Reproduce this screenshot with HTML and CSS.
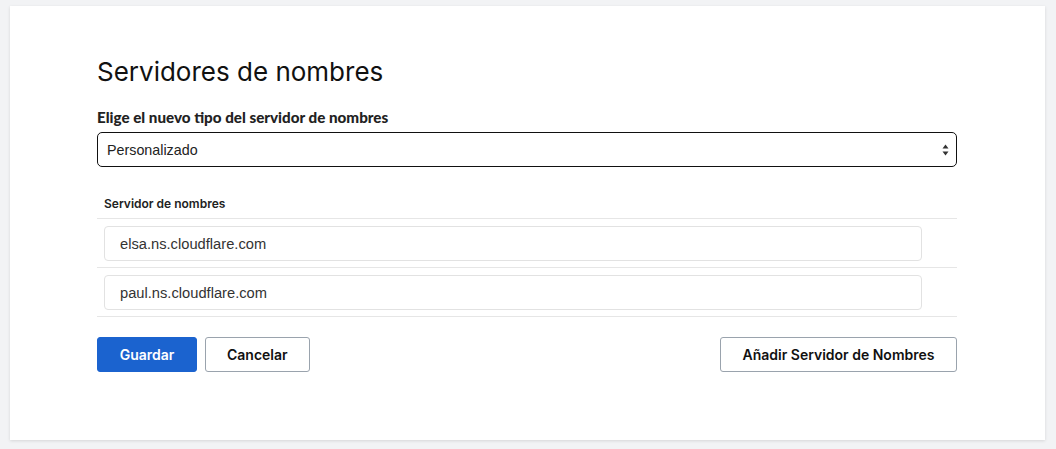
FILE: index.html
```html
<!DOCTYPE html>
<html lang="es">
<head>
<meta charset="utf-8">
<link rel="stylesheet" href="styles.css">
</head>
<body>
<div class="card">
  <h1 class="title">Servidores de nombres</h1>
  <label class="label" for="tipo">Elige el nuevo tipo del servidor de nombres</label>
  <div class="select">
    <span class="select-text">Personalizado</span>
    <svg class="arrows" width="7" height="12" viewBox="0 0 7 12"><path d="M3.5 0.5 L6.5 4.5 H0.5 Z" fill="#333"/><path d="M3.5 11.5 L6.5 7.5 H0.5 Z" fill="#333"/></svg>
  </div>
  <div class="table">
    <div class="thead">Servidor de nombres</div>
    <div class="row"><div class="input">elsa.ns.cloudflare.com</div></div>
    <div class="row"><div class="input">paul.ns.cloudflare.com</div></div>
  </div>
  <div class="actions">
    <div class="left">
      <button class="btn primary">Guardar</button>
      <button class="btn">Cancelar</button>
    </div>
    <button class="btn wide">Añadir Servidor de Nombres</button>
  </div>
</div>
</body>
</html>
```
FILE: styles.css
```css
html, body { margin: 0; padding: 0; }
body {
  background: #f2f3f5;
  padding: 6px 11px 9px 10px;
  font-family: "Liberation Sans", Arial, sans-serif;
}
.card {
  background: #fff;
  box-shadow: 0 1px 3px rgba(0,0,0,0.12);
  padding: 50px 88px 68px 87px;
  display: flex;
  flex-direction: column;
}
.title {
  margin: 0;
  font-family: "Inter", sans-serif;
  font-weight: 400;
  font-size: 26px;
  line-height: 32px;
  color: #111;
  letter-spacing: 0;
}
.label {
  margin-top: 21px;
  font-family: "Lato", sans-serif;
  font-weight: 900;
  font-size: 15.2px;
  line-height: 16px;
  color: #222;
}
.select {
  margin-top: 7px;
  height: 35px;
  box-sizing: border-box;
  border: 1px solid #111;
  border-radius: 5px;
  display: flex;
  align-items: center;
  justify-content: space-between;
  padding: 1px 7px 0 9px;
}
.select-text { font-size: 14.3px; color: #222; }
.table { margin-top: 30px; }
.thead {
  font-family: "Inter", sans-serif;
  font-weight: 600;
  font-size: 12px;
  color: #222;
  padding: 0 0 7px 7px;
  border-bottom: 1px solid #e6e6e6;
  line-height: 14px;
}
.row {
  padding: 7px 35px 6px 7px;
  border-bottom: 1px solid #e6e6e6;
}
.input {
  height: 35px;
  box-sizing: border-box;
  border: 1px solid #e2e2e2;
  border-radius: 4px;
  display: flex;
  align-items: center;
  padding-left: 15px;
  font-size: 14.7px;
  color: #333;
}
.actions {
  margin-top: 20px;
  display: flex;
  justify-content: space-between;
}
.left { display: flex; gap: 8px; }
.btn {
  height: 35px;
  box-sizing: border-box;
  border: 1px solid #9aa3ad;
  border-radius: 3px;
  background: #fff;
  font-family: "Inter", sans-serif;
  font-weight: 600;
  font-size: 14px;
  color: #111;
  padding: 0 21px;
  white-space: nowrap;
  cursor: pointer;
}
.btn.primary {
  background: #1b63cf;
  border-color: #1b63cf;
  color: #fff;
  width: 100px;
  padding: 0;
}
.btn.wide { width: 237px; padding: 0; }
```
